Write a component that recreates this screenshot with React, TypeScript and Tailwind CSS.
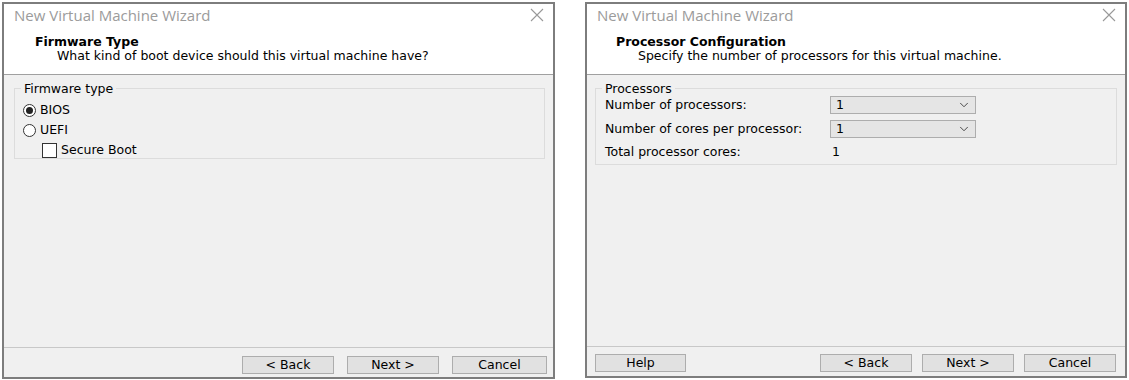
import { ChevronDown } from 'lucide-react';

const ui = { fontFamily: '"DejaVu Sans", "Liberation Sans", sans-serif' };

function TitleBar() {
  return (
    <div className="flex h-[21px] items-center justify-between pl-[10px] pr-[9px]">
      <span className="text-[15px] leading-[20px] text-[#9b9b9b]" style={{ fontFamily: '"Open Sans", sans-serif' }}>
        New Virtual Machine Wizard
      </span>
      <svg width="14" height="14" viewBox="0 0 14 14">
        <path d="M1 1L13 13M13 1L1 13" stroke="#999" strokeWidth="1.1" />
      </svg>
    </div>
  );
}

function Btn({ label, w = 'w-[92px]' }: { label: string; w?: string }) {
  return (
    <div className={`${w} flex h-[18px] items-center justify-center border border-[#adadad] bg-[#e1e1e1] text-[12.5px] text-black`}>
      {label}
    </div>
  );
}

function Wizard({
  title,
  subtitle,
  indent,
  children,
  footer,
  className,
}: {
  title: string;
  subtitle: string;
  indent: string;
  children: React.ReactNode;
  footer: React.ReactNode;
  className: string;
}) {
  return (
    <div className={`flex flex-col border-2 border-[#7d7d7d] bg-[#f0f0f0] ${className}`} style={ui}>
      <div className="h-[71px] border-b border-[#a0a0a0] bg-white">
        <TitleBar />
        <div className={`pt-[9px] ${indent}`}>
          <div className="text-[12.5px] font-bold leading-[15px] text-black">{title}</div>
          <div className="pl-[22px] text-[12.5px] leading-[14px] text-black">{subtitle}</div>
        </div>
      </div>
      <div className="flex-1 px-[8px] pt-[13px]">{children}</div>
      <div className="h-[30px] border-t border-[#c8c8c8] pt-[7px]">{footer}</div>
    </div>
  );
}

function GroupBox({ label, children, h }: { label: string; children: React.ReactNode; h: string }) {
  return (
    <div className={`relative border border-[#dcdcdc] ${h}`}>
      <span className="absolute -top-[8px] left-[6px] bg-[#f0f0f0] px-[3px] text-[12.5px] leading-[15px] text-black">
        {label}
      </span>
      {children}
    </div>
  );
}

function Radio({ checked, label }: { checked?: boolean; label: string }) {
  return (
    <div className="flex h-[20px] items-center gap-[4px] text-[12.5px] text-black">
      <span className="flex h-[13px] w-[13px] items-center justify-center rounded-full border border-[#333] bg-white">
        {checked && <span className="h-[7px] w-[7px] rounded-full bg-[#222]" />}
      </span>
      {label}
    </div>
  );
}

function Select() {
  return (
    <div className="flex h-[18px] w-[146px] items-center justify-between border border-[#adadad] bg-[#e5e5e5] pl-[5px] pr-[4px] text-[12.5px] text-black">
      <span>1</span>
      <ChevronDown size={14} strokeWidth={1.5} className="text-[#333]" />
    </div>
  );
}

export default function App() {
  return (
    <div className="flex h-[380px] w-[1129px] items-start bg-white pt-[2px] pl-[2px]">
      <Wizard
        className="h-[377px] w-[553px]"
        title="Firmware Type"
        subtitle="What kind of boot device should this virtual machine have?"
        indent="pl-[31px]"
        footer={
          <div className="flex justify-end gap-[13px] pr-[6px] pt-[1px]">
            <Btn label="< Back" />
            <Btn label="Next >" />
            <Btn label="Cancel" w="w-[95px]" />
          </div>
        }
      >
        <div className="pl-[2px]">
          <GroupBox label="Firmware type" h="h-[71px]">
            <div className="pl-[8px] pt-[11px]">
              <Radio checked label="BIOS" />
              <Radio label="UEFI" />
              <div className="flex h-[20px] items-center gap-[4px] pl-[19px] text-[12.5px] text-black">
                <span className="h-[15px] w-[15px] border border-[#333] bg-white" />
                Secure Boot
              </div>
            </div>
          </GroupBox>
        </div>
      </Wizard>

      <Wizard
        className="ml-[30px] h-[376px] w-[542px]"
        title="Processor Configuration"
        subtitle="Specify the number of processors for this virtual machine."
        indent="pl-[29px]"
        footer={
          <div className="flex items-center pl-[8px] pr-[9px]">
            <Btn label="Help" w="w-[91px]" />
            <div className="ml-auto flex gap-[10px]">
              <Btn label="< Back" />
              <Btn label="Next >" />
              <Btn label="Cancel" />
            </div>
          </div>
        }
      >
        <GroupBox label="Processors" h="h-[77px]">
          <div className="flex flex-col gap-[5px] pl-[9px] pt-[7px] text-[12.5px] text-black">
            <div className="flex items-center">
              <span className="w-[225px]">Number of processors:</span>
              <Select />
            </div>
            <div className="flex items-center">
              <span className="w-[225px]">Number of cores per processor:</span>
              <Select />
            </div>
            <div className="flex h-[18px] items-center">
              <span className="w-[227px]">Total processor cores:</span>
              <span>1</span>
            </div>
          </div>
        </GroupBox>
      </Wizard>
    </div>
  );
}
